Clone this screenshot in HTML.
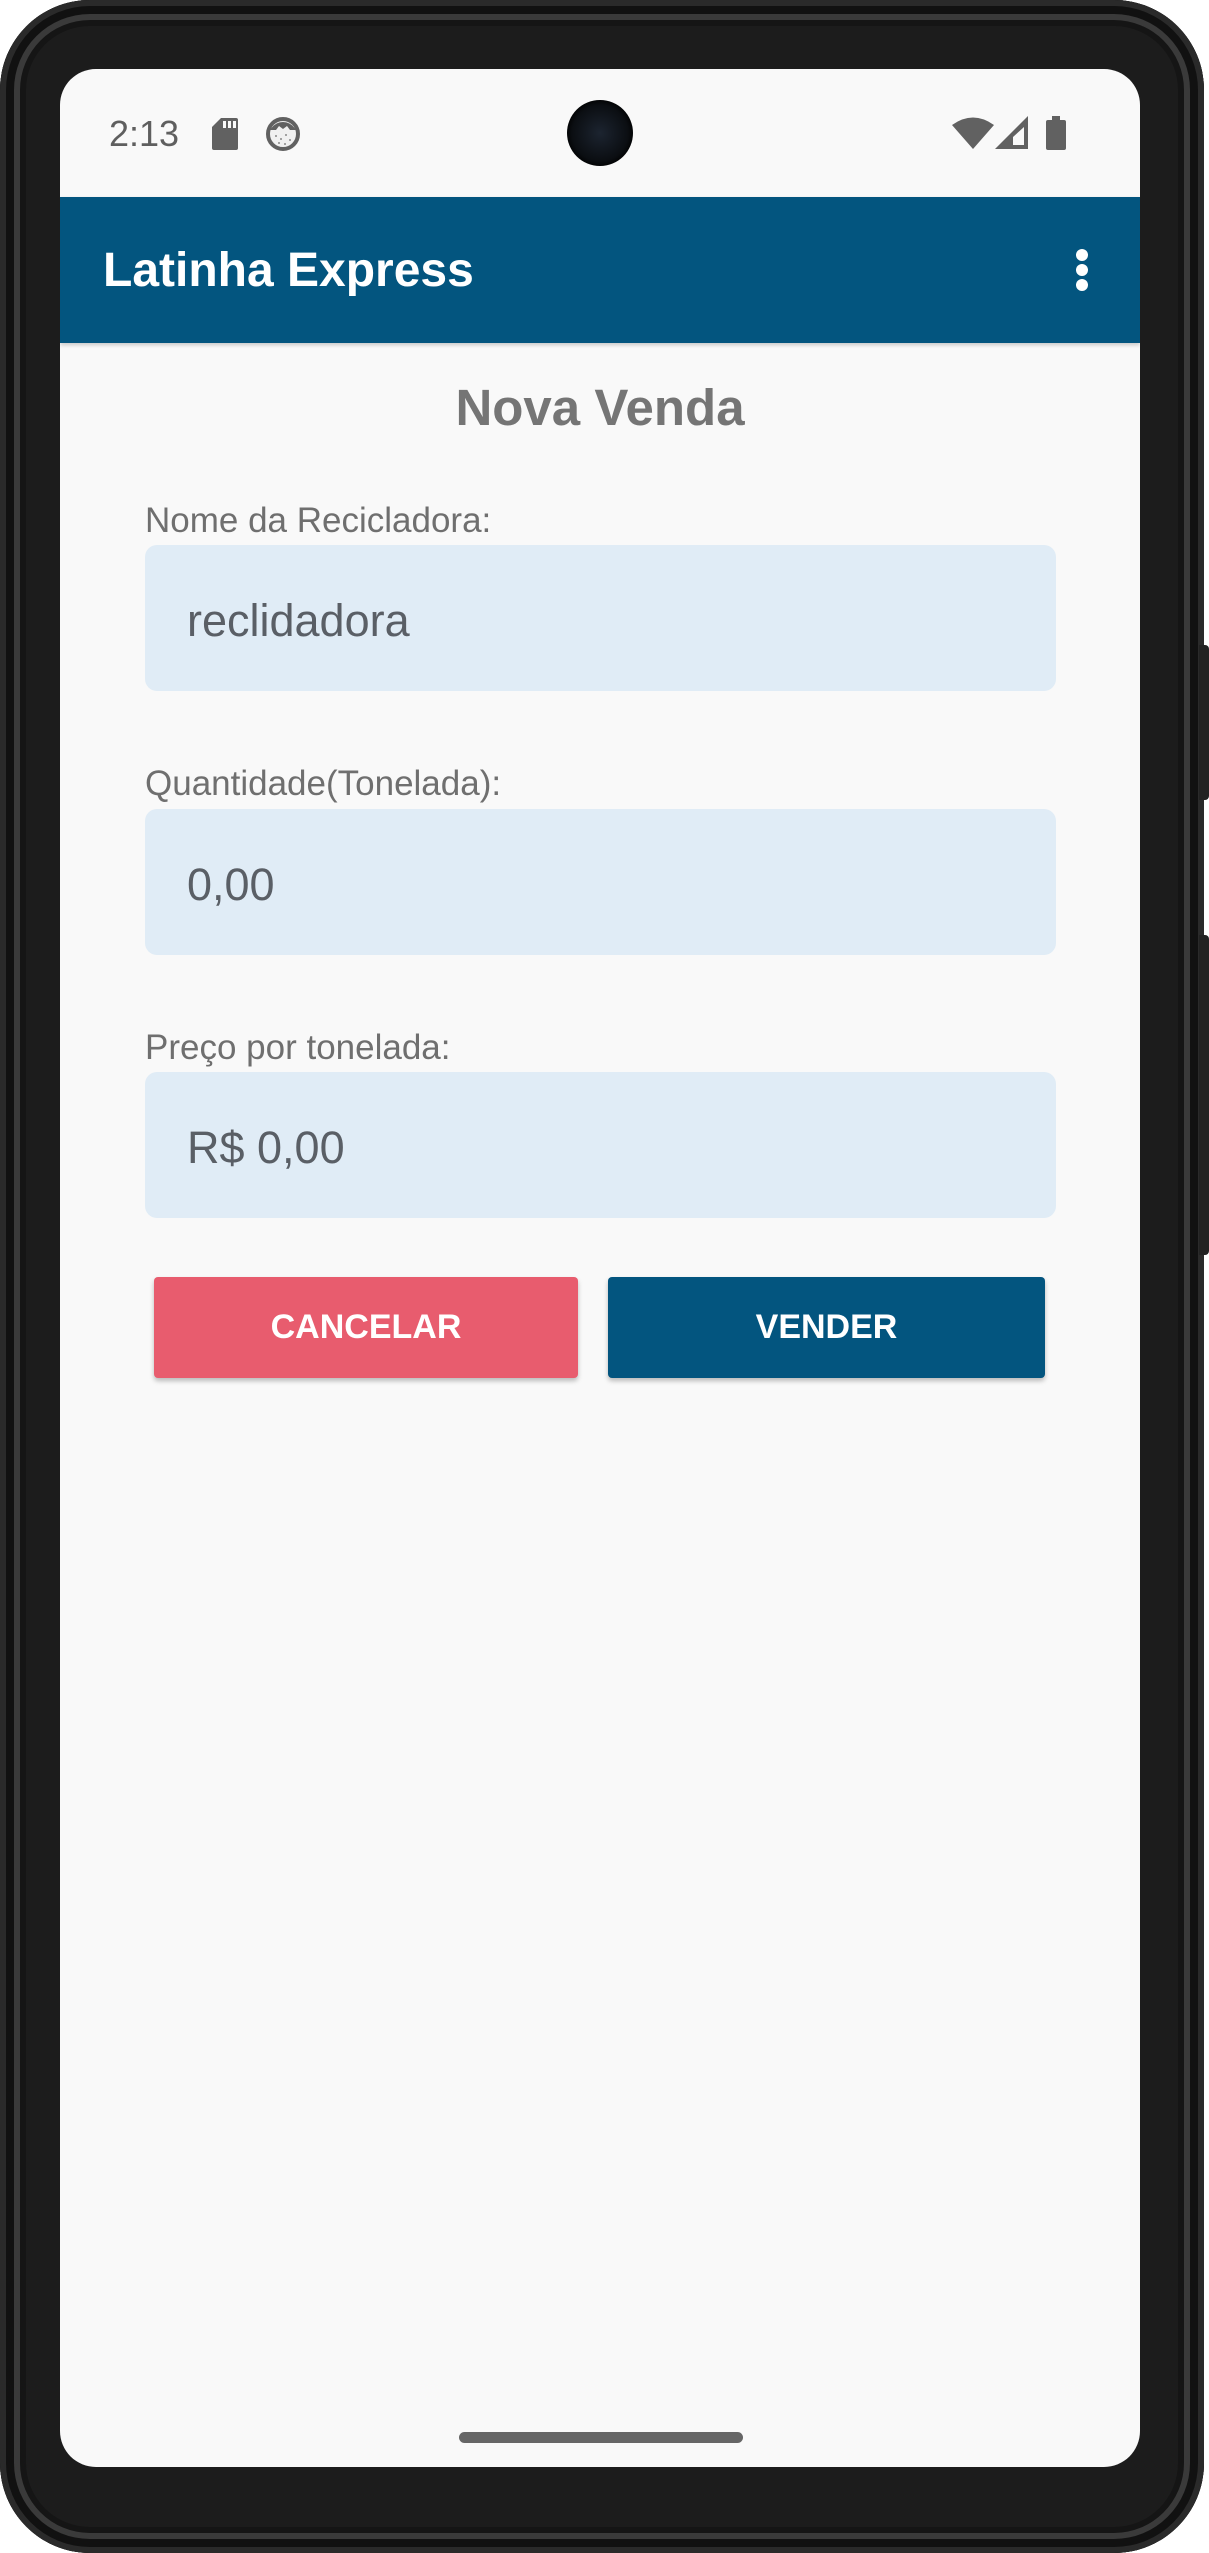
<!DOCTYPE html>
<html><head><meta charset="utf-8"><style>
html,body{margin:0;padding:0;background:#fff;}
body{width:1209px;height:2553px;position:relative;overflow:hidden;font-family:"Liberation Sans",sans-serif;}
.phone{position:absolute;left:0;top:0;width:1204px;height:2553px;border-radius:90px;background:#1c1c1c;box-shadow:inset 0 0 0 6px #2a2a2a, inset 0 0 0 14px #111, inset 0 0 0 20px #3a3a3a, inset 0 0 0 26px #151515;}
.btn1{position:absolute;left:1199px;top:645px;width:10px;height:155px;background:#222;border-radius:0 4px 4px 0;}
.btn2{position:absolute;left:1199px;top:935px;width:10px;height:320px;background:#222;border-radius:0 4px 4px 0;}
.screen{position:absolute;left:60px;top:69px;width:1080px;height:2398px;background:#f9f9f9;border-radius:36px;overflow:hidden;}
.abs{position:absolute;}
.time{left:49px;top:45px;font-size:36px;color:#5f5f5f;line-height:40px;}
.appbar{left:0;top:128px;width:1080px;height:146px;background:#03557f;box-shadow:0 2px 4px rgba(0,0,0,.2);}
.title{left:43px;top:44px;font-size:48px;font-weight:bold;color:#fff;line-height:60px;}
.dot{width:12px;height:12px;border-radius:50%;background:#fff;left:1016px;}
.h{left:0;width:1080px;text-align:center;top:309px;font-size:51px;font-weight:bold;color:#757575;line-height:60px;}
.lbl{left:85px;font-size:35px;color:#6f6f6f;line-height:40px;}
.box{left:85px;width:911px;height:146px;background:#e0ecf6;border-radius:12px;}
.val{left:42px;top:3px;line-height:146px;font-size:45px;color:#5a5f66;}
.b{top:1208px;height:101px;border-radius:4px;color:#fff;font-size:34px;font-weight:bold;text-align:center;line-height:101px;box-shadow:0 3px 5px rgba(0,0,0,.25);}
</style></head><body>
<div class="phone"></div>
<div class="btn1"></div><div class="btn2"></div>
<div class="screen">
  <div class="abs time">2:13</div>
  <svg class="abs" style="left:152px;top:49px" width="26" height="32" viewBox="0 0 26 32"><path d="M9 0H24a2 2 0 0 1 2 2V30a2 2 0 0 1-2 2H2a2 2 0 0 1-2-2V9Z" fill="#616161"/><rect x="11" y="3" width="3" height="7" fill="#f9f9f9"/><rect x="16" y="3" width="3" height="7" fill="#f9f9f9"/><rect x="21" y="3" width="3" height="7" fill="#f9f9f9"/></svg>
  <svg class="abs" style="left:206px;top:48px" width="34" height="34" viewBox="0 0 34 34"><circle cx="17" cy="17" r="15" fill="#f0f0f0" stroke="#616161" stroke-width="4"/><path d="M4 13 Q9 5 17 5 Q25 5 30 13 L24 13 L21 9 L17 12 L13 9 L10 13Z" fill="#616161"/><g fill="#888"><circle cx="10" cy="19" r="1"/><circle cx="15" cy="22" r="1"/><circle cx="20" cy="18" r="1"/><circle cx="24" cy="23" r="1"/><circle cx="13" cy="26" r="1"/><circle cx="19" cy="27" r="1"/></g></svg>
  <div class="abs" style="left:507px;top:31px;width:66px;height:66px;border-radius:50%;background:radial-gradient(circle at 50% 50%,#1c2430 0,#0b0e12 60%,#000 75%);"></div>
  <svg class="abs" style="left:892px;top:47px" width="42" height="33" viewBox="0 0 42 33"><path d="M0 9 Q21 -6 42 9 L21 33Z" fill="#616161"/></svg>
  <svg class="abs" style="left:935px;top:47px" width="33" height="33" viewBox="0 0 33 33"><path d="M33 0V33H0Z" fill="#616161"/><path d="M29 11V29H18V21Z" fill="#f9f9f9"/></svg>
  <svg class="abs" style="left:986px;top:47px" width="20" height="34" viewBox="0 0 20 34"><rect x="6" y="0" width="8" height="4" fill="#616161"/><rect x="0" y="4" width="20" height="30" rx="2" fill="#616161"/></svg>
  <div class="abs appbar">
    <div class="abs title">Latinha Express</div>
    <div class="abs dot" style="top:52px"></div>
    <div class="abs dot" style="top:67px"></div>
    <div class="abs dot" style="top:82px"></div>
  </div>
  <div class="abs h">Nova Venda</div>
  <div class="abs lbl" style="top:432px">Nome da Recicladora:</div>
  <div class="abs box" style="top:476px"><div class="abs val">reclidadora</div></div>
  <div class="abs lbl" style="top:695px">Quantidade(Tonelada):</div>
  <div class="abs box" style="top:740px"><div class="abs val">0,00</div></div>
  <div class="abs lbl" style="top:959px">Preço por tonelada:</div>
  <div class="abs box" style="top:1003px"><div class="abs val">R$ 0,00</div></div>
  <div class="abs b" style="left:94px;width:424px;background:#e85c6e">CANCELAR</div>
  <div class="abs b" style="left:548px;width:437px;background:#03557f">VENDER</div>
  <div class="abs" style="left:399px;top:2363px;width:284px;height:11px;border-radius:6px;background:#666"></div>
</div>
</body></html>
